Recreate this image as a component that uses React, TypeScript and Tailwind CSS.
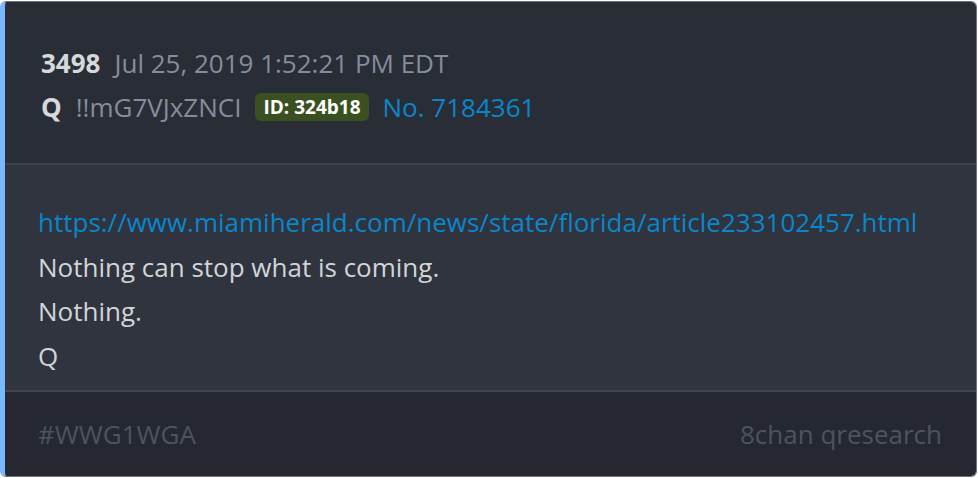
import React from "react";

export default function App() {
  return (
    <div className="w-[978px] h-[478px] bg-white pt-px" style={{ fontFamily: '"Open Sans", "Noto Sans", sans-serif' }}>
      <div className="w-[977px] h-[476px] rounded-md border border-[#6e727c] border-l-[5px] border-l-[#79b8ff] overflow-hidden flex flex-col">
        <div className="h-[163px] shrink-0 bg-[#292d36] border-b-2 border-[#3d414b] pl-[36px] pt-[43px] flex flex-col gap-[8px]">
          <div className="flex items-baseline gap-[14px] text-[26px] leading-[36px]">
            <span className="font-bold text-[#d6d8dc]">3498</span>
            <span className="text-[#878c9b]">Jul 25, 2019 1:52:21 PM EDT</span>
          </div>
          <div className="flex items-center text-[26px] leading-[36px]">
            <span className="font-bold text-[#d6d8dc]">Q</span>
            <span className="ml-[14px] text-[#878c9b]">!!mG7VJxZNCI</span>
            <span className="ml-[14px] rounded-md bg-[#3b5020] text-white font-bold text-[19px] leading-[28px] px-[8px]">ID: 324b18</span>
            <span className="ml-[14px] text-[#0a86cc]">No. 7184361</span>
          </div>
        </div>
        <div className="h-[227px] shrink-0 bg-[#2f343e] border-b-2 border-[#41454f] pl-[33px] pt-[35px] text-[26px] leading-[44.5px] text-[#d2d4d8]">
          <div className="text-[#0a86cc]">https://www.miamiherald.com/news/state/florida/article233102457.html</div>
          <div>Nothing can stop what is coming.</div>
          <div>Nothing.</div>
          <div>Q</div>
        </div>
        <div className="flex-1 bg-[#252830] flex items-center justify-between pl-[33px] pr-[34px] text-[26px] text-[#4e5360]">
          <span>#WWG1WGA</span>
          <span>8chan qresearch</span>
        </div>
      </div>
    </div>
  );
}
